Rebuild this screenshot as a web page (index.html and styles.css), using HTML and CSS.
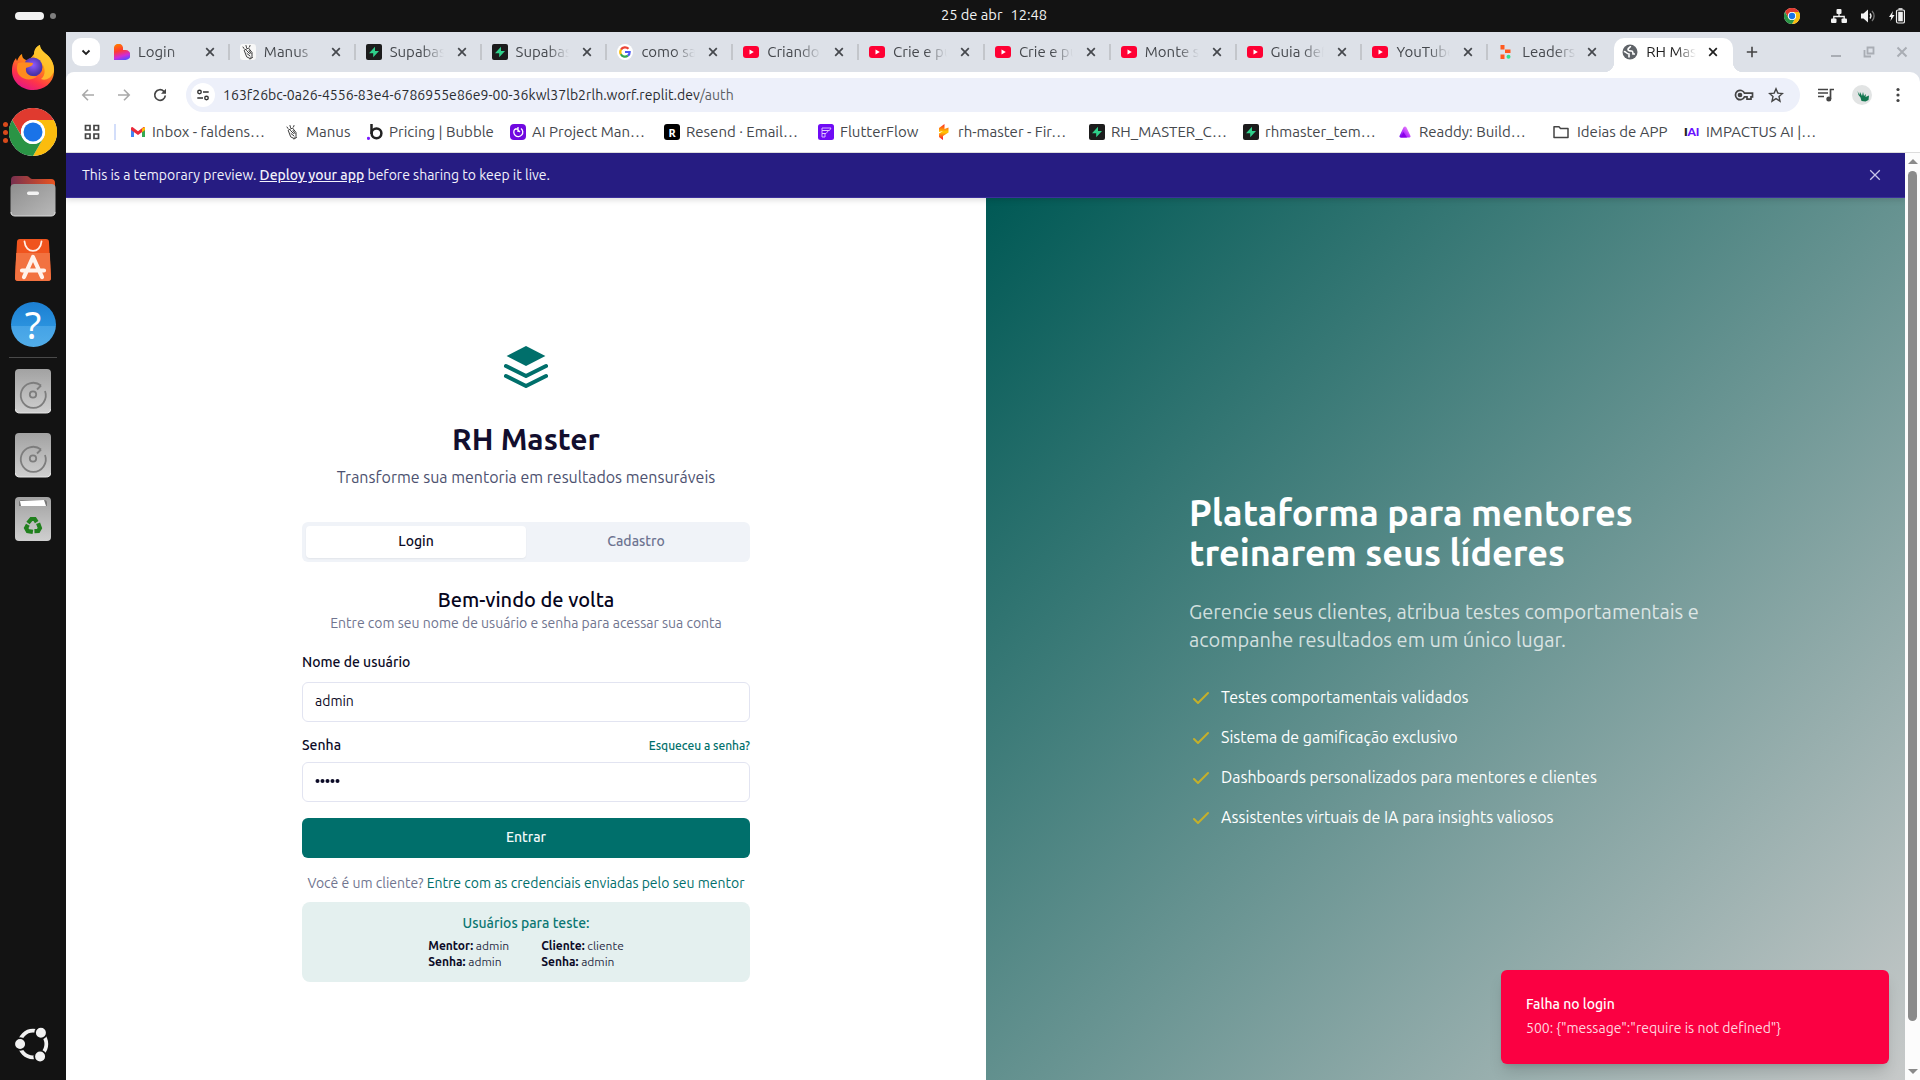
FILE: index.html
```html
<!DOCTYPE html>
<html lang="pt-BR">
<head>
<meta charset="utf-8">
<title>RH Master</title>
<link rel="stylesheet" href="styles.css">
</head>
<body>
<svg class="defs" aria-hidden="true">
  <defs>
    <linearGradient id="flame" x1=".8" y1="0" x2=".3" y2="1"><stop offset="0" stop-color="#fff44f"/><stop offset=".4" stop-color="#ff980e"/><stop offset=".75" stop-color="#ff3647"/><stop offset="1" stop-color="#e31587"/></linearGradient>
    <radialGradient id="globe" cx=".5" cy=".4"><stop offset="0" stop-color="#9059ff"/><stop offset="1" stop-color="#4b33a8"/></radialGradient>
    <linearGradient id="folder"><stop offset="0" stop-color="#77304f"/><stop offset="1" stop-color="#e95420"/></linearGradient>
    <linearGradient id="metal" x1="0" y1="0" x2="0" y2="1"><stop offset="0" stop-color="#a2a2a2"/><stop offset="1" stop-color="#cfcfcf"/></linearGradient>
    <linearGradient id="front" x1="0" y1="0" x2="1" y2="1"><stop offset="0" stop-color="#8e8e8e"/><stop offset="1" stop-color="#b9b9b9"/></linearGradient>
    <linearGradient id="love" x1=".3" y1="0" x2=".6" y2="1"><stop offset="0" stop-color="#ff7a00"/><stop offset=".4" stop-color="#ff3b30"/><stop offset=".75" stop-color="#d02bd8"/><stop offset="1" stop-color="#5a4bff"/></linearGradient>
    <linearGradient id="fire" x1="0" y1="0" x2="0" y2="1"><stop offset="0" stop-color="#f22"/><stop offset=".5" stop-color="#fc0"/><stop offset="1" stop-color="#f03"/></linearGradient>
    <linearGradient id="peak" x1="0" y1="1" x2="1" y2="0"><stop offset="0" stop-color="#6a00f0"/><stop offset=".5" stop-color="#c03cff"/><stop offset="1" stop-color="#ffb0f0"/></linearGradient>
  </defs>
  <symbol id="chrome" viewBox="0 0 48 48"><circle cx="24" cy="24" r="24" fill="#fff"/><path d="M24 12h20.800A24 24 0 0 0 3.200 12l10.400 18A12 12 0 0 1 24 12z" fill="#e03a2f"/><path d="M24 12h20.800A24 24 0 0 1 24 48l10.400-18A12 12 0 0 0 24 12z" fill="#fbbc0e"/><path d="M13.600 30L3.200 12A24 24 0 0 0 24 48l10.400-18A12 12 0 0 1 13.600 30z" fill="#2a9445"/><circle cx="24" cy="24" r="12" fill="#fff"/><circle cx="24" cy="24" r="9.500" fill="#1a73e8"/></symbol>
  <symbol id="youtube" viewBox="0 0 16 16"><rect y="2" width="16" height="12" rx="3" fill="#ff0033"/><path d="M6.500 5.500v5L10.800 8z" fill="#fff"/></symbol>
  <symbol id="supabase" viewBox="0 0 16 16"><rect width="16" height="16" rx="2" fill="#1c1c1c"/><path d="M9 2.800v4.100h4L7.200 13.200V9.200H3z" fill="#2fd08b"/></symbol>
  <symbol id="manus" viewBox="0 0 16 16"><g fill="none" stroke="#3c3c3c" stroke-width="1" stroke-linecap="round" stroke-linejoin="round"><path d="M4.500 6l4-2 3.500 4.500v4l-2 2-3-1.500zM6.500 6.500l3 3M7 9.500l3 2.500M9 6.500l2 3M4 4.500L3 3M6.500 3.500L6 1.500M9.500 3l.500-1.500M10 15l2.500-1.500"/></g></symbol>
  <symbol id="close" viewBox="0 0 16 16"><path d="M4.200 4.200l7.600 7.600M11.800 4.200l-7.600 7.600" stroke="currentColor" stroke-width="1.700"/></symbol>
  <symbol id="disk" viewBox="0 0 48 48"><rect x="6" y="2" width="36" height="44" rx="4" fill="url(#metal)"/><path d="M6.500 42c0 3 2 4 4 4h27c2 0 4-1 4-4" fill="none" stroke="#e6e6e6"/><g fill="none" stroke="#7d7d7d" stroke-width="1.800"><path d="M32 18.500a12.500 12.500 0 1 0 4 5.500"/><path d="M28 22.500l4-4"/><circle cx="24" cy="27.500" r="3.200"/></g></symbol>
  <symbol id="check" viewBox="0 0 24 24"><path d="M5 13l4 4L19 7" fill="none" stroke="currentColor" stroke-width="2" stroke-linecap="round" stroke-linejoin="round"/></symbol>
</svg>

<header class="topbar">
  <div class="workspaces"><i class="pill"></i><i class="dot"></i></div>
  <div class="clock"><span>25 de abr</span><span>12:48</span></div>
  <div class="tray">
    <svg class="tray-chrome"><use href="#chrome"/></svg>
    <svg class="tray-net" viewBox="0 0 16 16" fill="#f2f2f2"><rect x="5.500" y="1" width="5" height="5" rx="1"/><rect x="0" y="10.500" width="5.500" height="4.500" rx="1"/><rect x="10.500" y="10.500" width="5.500" height="4.500" rx="1"/><path d="M8 5v3.500M2.800 11V8.500h10.400V11" fill="none" stroke="#f2f2f2" stroke-width="1.300"/></svg>
    <svg class="tray-vol" viewBox="0 0 16 16" fill="#f2f2f2"><path d="M1 5.500h2.500L8 1.500v13L3.500 10.500H1z"/><path d="M10 5.500a4 4 0 0 1 0 5" fill="none" stroke="#f2f2f2" stroke-width="1.300"/><path d="M12 3a7 7 0 0 1 0 10" fill="none" stroke="#777" stroke-width="1.300"/></svg>
    <svg class="tray-bat" viewBox="0 0 16 16" fill="#f2f2f2"><path d="M4 3L0 9h2.200L1.500 13l4-6H3.200z"/><rect x="7.500" y="2" width="8" height="13" rx="1.500" fill="none" stroke="#f2f2f2" stroke-width="1.200"/><rect x="9.200" y="3.800" width="4.600" height="9.500"/><rect x="9.500" y="0.200" width="4" height="1.500"/></svg>
  </div>
</header>

<div class="desktop">
  <nav class="dock">
    <div class="slot"><svg viewBox="0 0 48 48"><path d="M25 10c0-5 3-8 6-9 0 4 3 6 6 9 4 3 9 9 8 18-.500 11-10 18-21 18S3 38 3 27c0-7 2-10 4-13 0 0 .500 2 1 3 1-3 3-6 5-7 0 3 1 5 4 6 3 0 5-2 8-6z" fill="url(#flame)"/><path d="M31 1c0 4 3 6 6 9 4 3 8 9 8 17-3 8-9 10-13 8 5-4 4-10 2-14-2-3-7-5-9-9 0-6 3-10 6-11z" fill="#ffc52b" opacity=".85"/><circle cx="24" cy="23" r="9.500" fill="url(#globe)"/><path d="M9 19c4-1 9-1 15 0 0 3-4 4-7 5-1 6 4 9 11 8-3 4-12 5-17 0-3-3-4-8-2-13z" fill="#ff8b1f"/></svg></div>
    <div class="slot running"><svg><use href="#chrome"/></svg></div>
    <div class="slot"><svg viewBox="0 0 48 48"><path d="M2 8a4 4 0 0 1 4-4h12c2 0 3 3 5 3h19a4 4 0 0 1 4 4v14H2z" fill="url(#folder)"/><rect x="1.500" y="12" width="45" height="32" rx="4" fill="url(#front)"/><path d="M2 40c0 3 2 4 4 4h36c2 0 4-1 4-4" fill="none" stroke="#d8d8d8"/><rect x="18" y="19.500" width="12" height="3.500" rx="1.700" fill="#f3f3f3"/></svg></div>
    <div class="slot"><svg viewBox="0 0 48 48"><path d="M11 3h26a3 3 0 0 1 3 3l2 36a3 3 0 0 1-3 3H9a3 3 0 0 1-3-3L8 6a3 3 0 0 1 3-3z" fill="#f0541e"/><path d="M7.200 17h33.600L42 42a3 3 0 0 1-3 3H9a3 3 0 0 1-3-3z" fill="#f27240"/><path d="M15.500 5.500c1 12.500 16 12.500 17 0" fill="none" stroke="#fff0e8" stroke-width="1.800" stroke-linecap="round"/><path d="M15 41l9-20 9 20M13 34.500h22" fill="none" stroke="#fff3ec" stroke-width="4.200" stroke-linecap="round" stroke-linejoin="round"/></svg></div>
    <div class="slot"><div class="help">?</div></div>
    <hr>
    <div class="slot"><svg><use href="#disk"/></svg></div>
    <div class="slot"><svg><use href="#disk"/></svg></div>
    <div class="slot"><svg viewBox="0 0 48 48"><rect x="6" y="2" width="36" height="44" rx="4" fill="url(#metal)"/><path d="M10 8c0-2 1-3 3-3h22c2 0 3 1 3 3v3H10z" fill="#777"/><path d="M11 6l24-1 2 6H12z" fill="#fff"/><g transform="translate(24 31)" fill="none" stroke="#20801d" stroke-width="4.200"><path d="M-5-3l3.300-4h3.400l2 3.200"/><path d="M-5-3l3.300-4h3.400l2 3.200" transform="rotate(120)"/><path d="M-5-3l3.300-4h3.400l2 3.200" transform="rotate(240)"/></g></svg></div>
    <div class="slot apps"><svg viewBox="0 0 48 48"><circle cx="24" cy="24" r="16" fill="none" stroke="#f2f2f2" stroke-width="4.500"/><g fill="#f2f2f2" stroke="#131313" stroke-width="2"><circle cx="8.500" cy="24" r="7"/><circle cx="33.500" cy="10.500" r="7"/><circle cx="32.500" cy="39" r="7"/></g></svg></div>
  </nav>

  <div class="browser">
    <div class="tabstrip">
      <button class="tab-search"><svg viewBox="0 0 16 16"><path d="M4.500 6.500L8 10l3.500-3.500" fill="none" stroke="#1f1f1f" stroke-width="1.800"/></svg></button>
      <div class="tabs">
        <div class="tab"><svg class="fav" viewBox="0 0 16 16"><path d="M0 5a4.500 4.500 0 0 1 9-1.500v2.500h2.500A4.700 4.700 0 0 1 11.500 16H0z" fill="url(#love)"/></svg><span>Login</span><svg class="x"><use href="#close"/></svg></div>
        <div class="tab"><svg class="fav plate"><use href="#manus"/></svg><span>Manus</span><svg class="x"><use href="#close"/></svg></div>
        <div class="tab"><svg class="fav"><use href="#supabase"/></svg><span>Supabase</span><svg class="x"><use href="#close"/></svg></div>
        <div class="tab"><svg class="fav"><use href="#supabase"/></svg><span>Supabase</span><svg class="x"><use href="#close"/></svg></div>
        <div class="tab"><svg class="fav" viewBox="0 0 16 16"><circle cx="8" cy="8" r="8" fill="#fff"/><g fill="none" stroke-width="2.200"><path d="M11.500 4.800A4.700 4.700 0 0 0 4 5.600" stroke="#ea4335"/><path d="M4 5.500a4.700 4.700 0 0 0 0 5" stroke="#fbbc05"/><path d="M3.900 10.300a4.700 4.700 0 0 0 7 1.400" stroke="#34a853"/><path d="M10.900 11.700A4.500 4.500 0 0 0 12.700 8H8" stroke="#4d5cf5"/></g></svg><span>como sa</span><svg class="x"><use href="#close"/></svg></div>
        <div class="tab"><svg class="fav"><use href="#youtube"/></svg><span>Criando</span><svg class="x"><use href="#close"/></svg></div>
        <div class="tab"><svg class="fav"><use href="#youtube"/></svg><span>Crie e pu</span><svg class="x"><use href="#close"/></svg></div>
        <div class="tab"><svg class="fav"><use href="#youtube"/></svg><span>Crie e pu</span><svg class="x"><use href="#close"/></svg></div>
        <div class="tab"><svg class="fav"><use href="#youtube"/></svg><span>Monte s</span><svg class="x"><use href="#close"/></svg></div>
        <div class="tab"><svg class="fav"><use href="#youtube"/></svg><span>Guia def</span><svg class="x"><use href="#close"/></svg></div>
        <div class="tab"><svg class="fav"><use href="#youtube"/></svg><span>YouTube</span><svg class="x"><use href="#close"/></svg></div>
        <div class="tab last"><svg class="fav" viewBox="0 0 16 16"><path d="M2.500 1h4v4.500h-4zM7 5.500h5.500v3.500H7zM2.500 10.500h4V15h-4z" fill="#ff5a1f"/><circle cx="10.500" cy="12.800" r="2" fill="#2fe08f"/></svg><span>Leaders</span><svg class="x"><use href="#close"/></svg></div>
        <div class="tab active"><svg class="fav" viewBox="0 0 16 16"><circle cx="8" cy="8" r="7.500" fill="#5f6368"/><path d="M1.800 7.500c2.500 0 2.700 2.500 5.200 2.500v3.500M8.500 2c0 2-2.500 1.500-2.500 3.500 0 1.500 2 1.500 3.500 1.500s1.500 2 1.500 3h2" fill="none" stroke="#fff" stroke-width="1.600"/></svg><span>RH Mast</span><svg class="x"><use href="#close"/></svg></div>
      </div>
      <svg class="newtab" viewBox="0 0 16 16"><path d="M8 2.800v10.400M2.800 8h10.400" stroke="#444" stroke-width="1.600"/></svg>
      <div class="winctl">
        <svg viewBox="0 0 16 16"><path d="M3 12h10" stroke="currentColor" stroke-width="2"/></svg>
        <svg viewBox="0 0 16 16" fill="none" stroke="currentColor" stroke-width="1.800"><path d="M6.500 3.500h6v6h-6zM3.500 6v6.500H10"/></svg>
        <svg viewBox="0 0 16 16"><path d="M3.500 3.500l9 9M12.500 3.500l-9 9" stroke="currentColor" stroke-width="2"/></svg>
      </div>
    </div>

    <div class="toolbar">
      <svg class="nav off" viewBox="0 0 16 16"><path d="M14 8H3M8 2.800L2.800 8 8 13.200" fill="none" stroke="currentColor" stroke-width="1.600"/></svg>
      <svg class="nav off" viewBox="0 0 16 16"><path d="M2 8h11M8 2.800L13.200 8 8 13.200" fill="none" stroke="currentColor" stroke-width="1.600"/></svg>
      <svg class="nav" viewBox="0 0 16 16"><path d="M13.300 8.500A5.300 5.300 0 1 1 11.800 4.300L13 5.500" fill="none" stroke="currentColor" stroke-width="1.700"/><path d="M14 1.800v5H9z" fill="currentColor"/></svg>
      <div class="omnibox">
        <span class="site"><svg viewBox="0 0 16 16" fill="none" stroke="#333" stroke-width="1.600"><circle cx="4" cy="4.500" r="2"/><path d="M8 4.500h6.500M1.500 11.500H8"/><circle cx="12" cy="11.500" r="2"/></svg></span>
        <span class="url">163f26bc-0a26-4556-83e4-6786955e86e9-00-36kwl37lb2rlh.worf.replit.dev<em>/auth</em></span>
        <svg class="key" viewBox="0 0 20 16" fill="none" stroke="#444" stroke-width="1.700"><path d="M10.500 6.200A4.700 4.700 0 1 0 10.500 9.800H13V12.200H17V9.800H18.500V6.200z"/><circle cx="6" cy="8" r="1.500" fill="#444"/></svg>
        <svg class="star" viewBox="0 0 16 16"><path d="M8 1.800l1.800 4.300 4.700.400-3.500 3.100 1 4.600L8 11.700l-4 2.500 1-4.600L1.500 6.500l4.700-.400z" fill="none" stroke="#444" stroke-width="1.400"/></svg>
      </div>
      <svg class="media" viewBox="0 0 16 16"><path d="M0 2.500h10M0 6h10M0 9.500h6" stroke="#444" stroke-width="1.700"/><path d="M12.500 12V2.500H16" fill="none" stroke="#444" stroke-width="1.700"/><circle cx="10.800" cy="12" r="2.500" fill="#444"/></svg>
      <svg class="avatar" viewBox="0 0 20 20"><circle cx="10" cy="10" r="10" fill="#e2e4e4"/><path d="M5.500 6l2 4 .500-3 2 4 1-4 1 4 2-2-.500 3 3.500-1.500-.500 4.500-3 1.500-4-.500-1-3.500-2-2.500z" fill="#12764f"/></svg>
      <svg class="menu" viewBox="0 0 4 16" fill="#444"><circle cx="2" cy="2.500" r="1.600"/><circle cx="2" cy="8" r="1.600"/><circle cx="2" cy="13.500" r="1.600"/></svg>
    </div>

    <div class="bookmarks">
      <div class="allapps"><svg viewBox="0 0 16 16" fill="none" stroke="#444" stroke-width="1.700"><path d="M1.500 1.500h4.500v4.500H1.500zM10 1.500h4.500v4.500H10zM1.500 10h4.500v4.500H1.500zM10 10h4.500v4.500H10z"/></svg></div>
      <div class="bm"><svg viewBox="0 0 16 16"><path d="M1 4v9h3V7z" fill="#4285f4"/><path d="M15 4v9h-3V7z" fill="#34a853"/><path d="M1 3.500L2.500 3 8 7.200 13.500 3l1.500.500V6l-7 5-7-5z" fill="#ea2a3a"/><path d="M12 4.500L15 3v3l-3 2.300z" fill="#fbbc04"/></svg><span>Inbox - faldens…</span></div>
      <div class="bm"><svg><use href="#manus"/></svg><span>Manus</span></div>
      <div class="bm"><svg viewBox="0 0 16 16"><path d="M4.500 0v10" stroke="#222" stroke-width="2.500"/><circle cx="9.500" cy="9.300" r="4.900" fill="none" stroke="#222" stroke-width="2.500"/><circle cx="1.500" cy="14.300" r="1.600" fill="#7a1cff"/></svg><span>Pricing | Bubble</span></div>
      <div class="bm"><svg viewBox="0 0 16 16"><rect width="16" height="16" rx="4" fill="#7008e0"/><path d="M11 4.500a4.500 4.500 0 1 1-6 .500M5 5h3v3M8 3v3l2 2" fill="none" stroke="#fff" stroke-width="1.300"/></svg><span>AI Project Man…</span></div>
      <div class="bm"><i class="chip">R</i><span>Resend · Email…</span></div>
      <div class="bm"><svg viewBox="0 0 16 16"><rect width="16" height="16" rx="2.500" fill="#6f0bf5"/><path d="M4 4h9l-1.500 2.500H4zM4 6.500h6.500L8 9.500H4zM4 9.500h3V13H4z" fill="none" stroke="#e2cbff" stroke-width=".9"/></svg><span>FlutterFlow</span></div>
      <div class="bm"><svg viewBox="0 0 16 16"><path d="M8.500 0v5L12.500 3.500V8.500L7 12v4l-4-3V9.500l4-2.500-4 1V4z" fill="url(#fire)"/></svg><span>rh-master - Fir…</span></div>
      <div class="bm"><svg><use href="#supabase"/></svg><span>RH_MASTER_C…</span></div>
      <div class="bm"><svg><use href="#supabase"/></svg><span>rhmaster_tem…</span></div>
      <div class="bm"><svg viewBox="0 0 16 16"><path d="M8 2.500c1 0 1.500.800 2 2l3.500 7.500c.500 1.500-1 1.500-2 1.500h-7c-1 0-2.500 0-2-1.500L6 4.500c.500-1.200 1-2 2-2z" fill="url(#peak)"/><path d="M6.500 8l3.500 5.500H3.500z" fill="#8a00e8"/></svg><span>Readdy: Build…</span></div>
      <div class="bm folder"><svg viewBox="0 0 16 16"><path d="M1 2.800h5l1.500 1.700H15v9H1z" fill="none" stroke="#444" stroke-width="1.500" stroke-linejoin="round"/></svg><span>Ideias de APP</span></div>
      <div class="bm"><i class="iai">I<b>AI</b></i><span>IMPACTUS AI |…</span></div>
    </div>

    <div class="viewport">
      <div class="page">
        <div class="banner"><p>This is a temporary preview. <a>Deploy your app</a> before sharing to keep it live.</p><svg viewBox="0 0 16 16"><path d="M3.200 3.200l9.600 9.600M12.800 3.200l-9.600 9.600" stroke="currentColor" stroke-width="1.300"/></svg></div>
        <div class="split">
          <main class="auth">
            <div class="form">
              <svg class="logo" viewBox="0 0 24 24"><path d="M12 2L2.300 7 12 12l9.700-5z"/><path d="M2 12l10 5 10-5M2 17l10 5 10-5" fill="none" stroke="currentColor" stroke-width="2" stroke-linecap="round" stroke-linejoin="round"/></svg>
              <h1>RH Master</h1>
              <p class="tagline">Transforme sua mentoria em resultados mensuráveis</p>
              <div class="switch"><span class="on">Login</span><span>Cadastro</span></div>
              <h2>Bem-vindo de volta</h2>
              <p class="hint">Entre com seu nome de usuário e senha para acessar sua conta</p>
              <label>Nome de usuário</label>
              <div class="input">admin</div>
              <div class="pwrow"><span>Senha</span><a>Esqueceu a senha?</a></div>
              <div class="input dots"><svg viewBox="0 0 25 6" fill="#0b0a26"><circle cx="2.500" cy="3" r="2"/><circle cx="7.500" cy="3" r="2"/><circle cx="12.500" cy="3" r="2"/><circle cx="17.500" cy="3" r="2"/><circle cx="22.500" cy="3" r="2"/></svg></div>
              <button class="submit">Entrar</button>
              <p class="client">Você é um cliente? <a>Entre com as credenciais enviadas pelo seu mentor</a></p>
              <div class="demo">
                <h3>Usuários para teste:</h3>
                <div class="cols">
                  <p><b>Mentor:</b> admin<br><b>Senha:</b> admin</p>
                  <p><b>Cliente:</b> cliente<br><b>Senha:</b> admin</p>
                </div>
              </div>
            </div>
          </main>
          <aside class="hero">
            <div class="pitch">
              <h2>Plataforma para mentores<br>treinarem seus líderes</h2>
              <p>Gerencie seus clientes, atribua testes comportamentais e<br>acompanhe resultados em um único lugar.</p>
              <ul>
                <li><svg><use href="#check"/></svg><span>Testes comportamentais validados</span></li>
                <li><svg><use href="#check"/></svg><span>Sistema de gamificação exclusivo</span></li>
                <li><svg><use href="#check"/></svg><span>Dashboards personalizados para mentores e clientes</span></li>
                <li><svg><use href="#check"/></svg><span>Assistentes virtuais de IA para insights valiosos</span></li>
              </ul>
            </div>
          </aside>
        </div>
        <div class="toast"><strong>Falha no login</strong><span>500: {"message":"require is not defined"}</span></div>
      </div>
      <div class="scrollbar"><i class="up"></i><i class="thumb"></i><i class="down"></i></div>
    </div>
  </div>
</div>
</body>
</html>
```
FILE: styles.css
```css
*{box-sizing:border-box}
html,body{margin:0;height:100%;overflow:hidden}
body{display:flex;flex-direction:column;width:1920px;height:1080px;background:#131313;font-family:Ubuntu,"Open Sans",sans-serif;font-size:14px;color:#0b0a26}
h1,h2,h3,p,ul{margin:0;padding:0;font-size:inherit;font-weight:inherit}
button{border:0;padding:0;font:inherit}
svg{display:block;flex:none}
.defs{position:absolute;width:0;height:0}

/* system bar */
.topbar{display:grid;grid-template-columns:1fr auto 1fr;align-items:center;height:32px;flex:none;color:#f2f2f2;padding:0 15px}
.workspaces{display:flex;align-items:center;gap:6px}
.pill{width:29px;height:8px;border-radius:4px;background:#f2f2f2}
.dot{width:6px;height:6px;border-radius:50%;background:#7f7f7f}
.clock{display:flex;gap:8px;font-size:14.67px;line-height:32px;padding-left:68px;margin-top:-2px}
.tray{display:flex;align-items:center;justify-content:flex-end}
.tray svg{width:16px;height:16px}
.tray .tray-net{margin-left:31px}
.tray .tray-vol{margin-left:13px}
.tray .tray-bat{margin-left:13px}

.desktop{display:flex;flex:1;min-height:0}

/* dock */
.dock{display:flex;flex-direction:column;width:66px;padding-top:4px;flex:none}
.slot{position:relative;display:flex;align-items:center;justify-content:center;height:64px;flex:none}
.slot svg{width:48px;height:48px}
.dock hr{width:48px;height:1px;border:0;background:#4a4a4a;margin:1px 9px 1px}
.running::before{content:"";position:absolute;left:3px;top:26px;width:5px;height:5px;border-radius:50%;background:#d84a1b;box-shadow:0 8px #d84a1b,0 -8px #d84a1b;margin-top:4px}
.help{width:45px;height:45px;border-radius:50%;background:linear-gradient(#1c7fd2 0,#2a92de 54%,#45a3e6 54%,#51ade9 100%);color:#fff;font:400 38px/44px "Noto Sans",sans-serif;text-align:center}
.apps{margin-top:auto;height:72px}
.apps svg{width:40px;height:40px}

/* browser chrome */
.browser{display:flex;flex-direction:column;flex:1;min-width:0;background:#dde1e8}
.tabstrip{display:flex;height:40px;flex:none;padding:6px 0 0 6px}
.tab-search{display:flex;align-items:center;justify-content:center;width:28px;height:28px;border-radius:9px;background:#fff;margin-right:4px}
.tab-search svg{width:16px;height:16px}
.tabs{display:flex;font-size:15px}
.tab{position:relative;display:flex;align-items:center;width:125.85px;height:34px;padding:0 12px 6px 10px;color:#45484d}
.tab:not(.last):not(.active)::after{content:"";position:absolute;right:0;top:6px;width:2px;height:16px;background:#c3c6cb}
.fav{width:16px;height:16px;margin-right:8px}
.plate{background:#f8f8f8;border-radius:3px}
.tab span{width:54px;overflow:hidden;white-space:nowrap;line-height:20px;mask-image:linear-gradient(90deg,#000 60%,transparent)}
.x{width:16px;height:16px;margin-left:10px}
.tab.last .x{margin-left:8px}
.tab.active{width:119px;background:#fff;border-radius:10px 10px 0 0;color:#1f1f1f;padding-left:8px}
.tab.active .x{margin-left:9px}
.tab.active::before{content:"";position:absolute;left:-10px;right:-10px;bottom:0;height:10px;background:radial-gradient(circle at 0 0,transparent 10px,#fff 10.5px) left/10px 10px no-repeat,radial-gradient(circle at 100% 0,transparent 10px,#fff 10.5px) right/10px 10px no-repeat}
.newtab{width:16px;height:16px;margin:6px 0 0 11px}
.winctl{display:flex;gap:17px;margin:6px 10px 0 auto;color:#a9adb4}
.winctl svg{width:16px;height:16px}
.toolbar{display:flex;align-items:center;height:46px;flex:none;background:#fff;border-radius:8px 10px 0 0;padding-left:14px;color:#444}
.nav{width:16px;height:16px;margin-right:20px}
.nav.off{color:#a9a9a9}
.omnibox{display:flex;align-items:center;width:1614px;height:34px;border-radius:17px;background:#edf0fa;padding-left:5px;margin-left:-2px}
.site{display:flex;align-items:center;justify-content:center;width:24px;height:24px;border-radius:50%;background:#fff;margin-right:8px}
.site svg{width:14px;height:14px}
.url{flex:1;color:#2a2c30;letter-spacing:.05px}
.url em{font-style:normal;color:#5b5e63}
.key{width:20px;height:16px;margin-right:14px}
.star{width:16px;height:16px;margin-right:16px}
.media{width:16px;height:16px;margin-left:18px}
.avatar{width:20px;height:20px;margin-left:18px}
.menu{width:4px;height:16px;margin-left:24px}
.bookmarks{display:grid;grid-template-columns:64px 154px 83px 143px 154px 154px 118px 153px 154px 154px 155px 132px 150px;align-items:center;height:35px;flex:none;background:#fff;border-bottom:1px solid #dcdcdc;padding-bottom:6px;color:#45484d;font-size:15px}
.allapps{display:flex;padding-left:18px;border-right:2px solid #d3defa;width:50px;height:16px}
.allapps svg{width:16px;height:16px}
.bm{display:flex;align-items:center;gap:6px;white-space:nowrap}
.bm svg{width:16px;height:16px}
.bm span{line-height:18px;margin-top:-1px}
.folder{gap:8px;padding-left:1px}
.chip{display:flex;align-items:center;justify-content:center;width:16px;height:16px;border-radius:3px;background:#000;color:#fff;font:700 11px "Noto Sans",sans-serif}
.iai{width:16px;font:800 12px/16px Lato,sans-serif;letter-spacing:-.2px;color:#222}
.iai b{color:#6a12ff}

/* page */
.viewport{display:flex;flex:1;min-height:0;background:#fff}
.page{position:relative;display:flex;flex-direction:column;width:1839px;overflow:hidden}
.banner{display:flex;align-items:center;justify-content:space-between;height:45px;flex:none;background:#261c82;border-bottom:1px solid #3c2f9c;color:#f3f2fb;padding:0 22px 0 16px;box-shadow:0 2px 6px rgba(0,0,0,.14);z-index:1}
.banner a{font-weight:500;text-decoration:underline}
.banner svg{width:16px;height:16px;color:#c9c6ea}
.split{display:grid;grid-template-columns:920px 919px;height:928px;flex:none}
.auth{display:flex;align-items:center;justify-content:center;background:#fff}
.form{display:flex;flex-direction:column;width:448px;line-height:20px;text-align:center}
.logo{width:48px;height:48px;align-self:center;margin-bottom:31px;color:#006f6b;fill:#006f6b}
.form h1{font-size:30px;font-weight:700;line-height:36px;margin-bottom:8px;color:#120e2e}
.tagline{font-size:16px;line-height:24px;color:#4d5270;margin-bottom:33px}
.switch{display:grid;grid-template-columns:220px 220px;height:40px;padding:4px;border-radius:6px;background:#f0f3f8;font-weight:500;line-height:31px;color:#6d7391;margin-bottom:24px}
.switch .on{background:#fff;border-radius:4px;color:#0b0a26;box-shadow:0 1px 2px rgba(0,0,0,.06)}
.form h2{font-size:20px;font-weight:550;line-height:28px;color:#06051c}
.hint{color:#70758f;margin:-1px 0 17px}
.form label{font-weight:500;line-height:24px;text-align:left;margin-bottom:8px}
.input{display:flex;align-items:center;height:40px;border:1px solid #e2e4f1;border-radius:6px;padding:0 12px 2px;margin-bottom:16px}
.dots svg{width:25px;height:6px}
.pwrow{display:flex;align-items:center;justify-content:space-between;height:16px;font-weight:500;margin-bottom:8px}
.pwrow span{line-height:18px;padding-bottom:2px}
.pwrow a{font-size:12px;color:#006f6b}
.submit{height:40px;border-radius:6px;background:#006f6b;color:#f3fafa;font-weight:500;padding-bottom:2px;margin-bottom:15px}
.client{color:#70758f;margin-bottom:9px}
.client a{color:#006f6b}
.demo{height:80px;border-radius:8px;background:#e4f0ef;padding:11px 0 13px}
.demo h3{font-weight:500;line-height:20px;color:#0a7672;margin-bottom:5px}
.cols{display:flex;justify-content:center;gap:32px;font-size:12px;line-height:16px;text-align:left;color:#2a2c45}
.cols b{font-weight:700;color:#0b0a26}
.hero{display:flex;flex-direction:column;justify-content:center;padding-left:203px;background:linear-gradient(135deg,#005955,#cccccc);color:#fff}
.pitch h2{font-size:36px;font-weight:700;line-height:40px;margin:-1px 0 25px}
.pitch p{font-size:20px;line-height:28px;color:rgba(255,255,255,.75);margin-bottom:32px}
.pitch ul{display:flex;flex-direction:column;gap:16px;list-style:none}
.pitch li{display:flex;align-items:center;gap:8px;height:24px;font-size:16px;line-height:24px}
.pitch li span{padding-bottom:2px}
.pitch li svg{width:24px;height:24px;color:#c5b02b}
.toast{position:absolute;right:16px;bottom:16px;display:flex;flex-direction:column;gap:4px;width:388px;height:94px;padding:24px 25px;border-radius:6px;background:#fb0042;color:#fff;line-height:20px;box-shadow:0 10px 15px -3px rgba(0,0,0,.15),0 4px 6px -4px rgba(0,0,0,.15)}
.toast strong{font-weight:550}
.toast span{color:#ffd5df}
.scrollbar{display:flex;flex-direction:column;align-items:center;width:15px;background:#fcfcfc;padding:6px 0 6px}
.up,.down{border:5px solid transparent;border-top:0;border-bottom:5px solid #8a8a8a}
.down{border:5px solid transparent;border-bottom:0;border-top:5px solid #8a8a8a;margin-top:auto}
.thumb{width:9px;height:850px;border-radius:5px;background:#8b8b8b;margin-top:7px}
```
